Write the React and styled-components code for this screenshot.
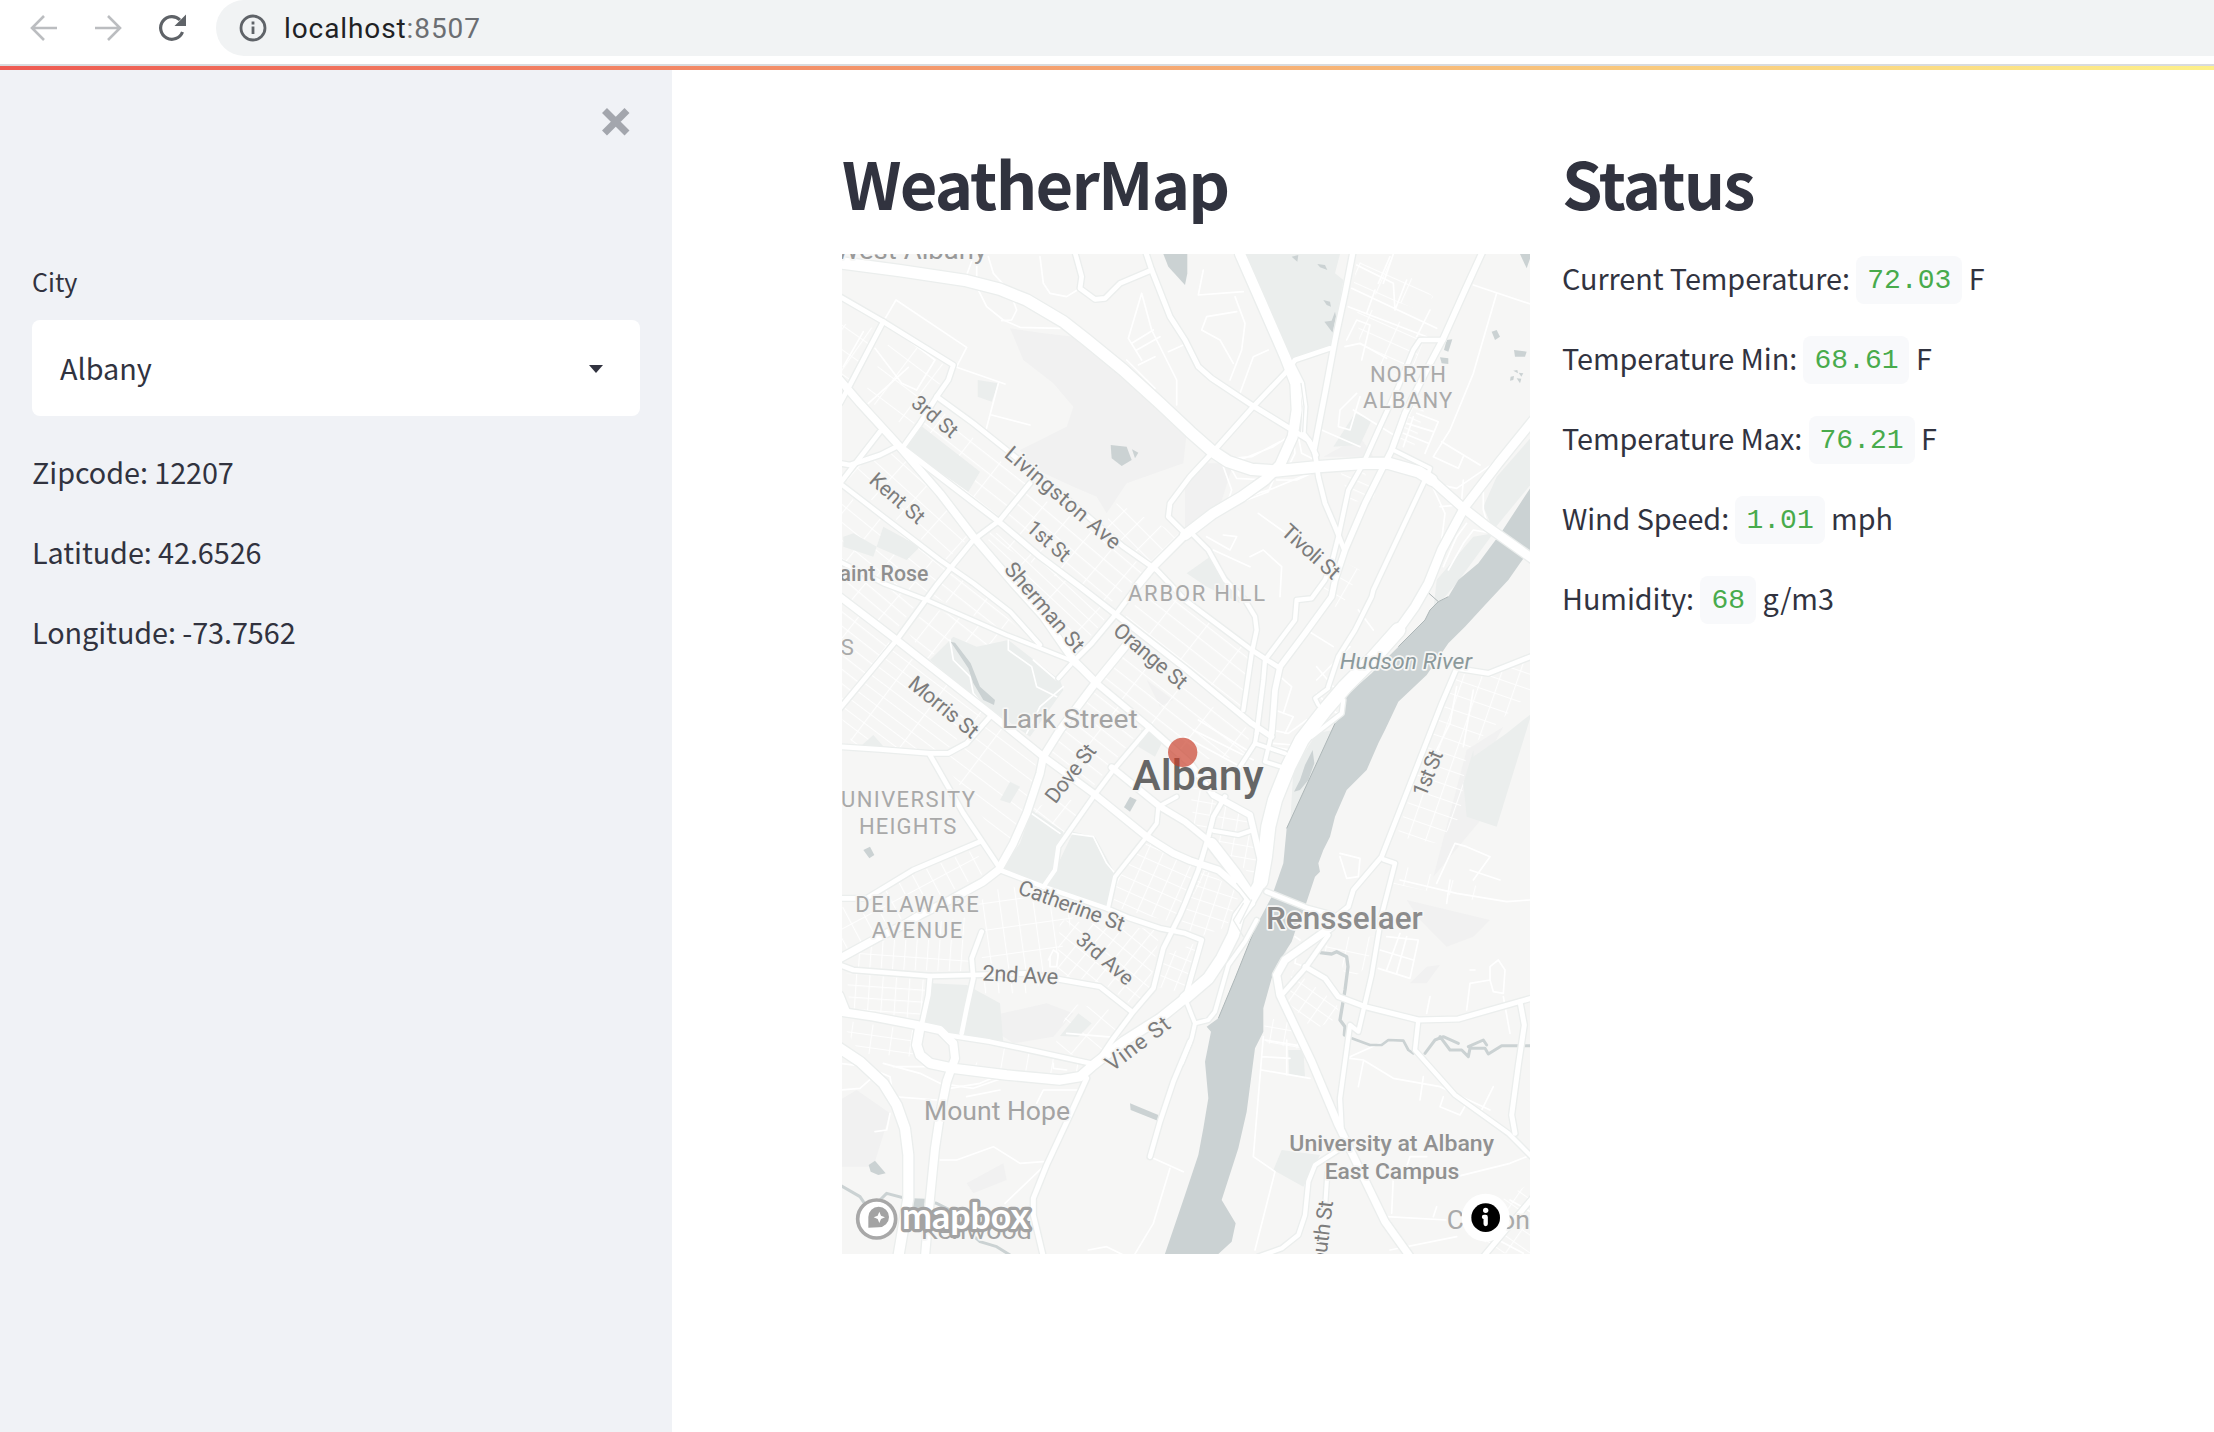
import React from 'react';
import styled, { createGlobalStyle } from 'styled-components';

const sans = `'Noto Sans CJK SC', 'Open Sans', sans-serif`;

const GlobalStyle = createGlobalStyle`
  * { box-sizing: border-box; }
  body { margin: 0; background: #fff; color: #31333f; font-family: ${sans}; overflow: hidden; }
  h1, p { margin: 0; }
`;

const Page = styled.div`
  width: 2214px;
  height: 1432px;
  display: flex;
  flex-direction: column;
`;

const BrowserBar = styled.header`
  height: 66px;
  flex: none;
  display: flex;
  align-items: flex-start;
  border-bottom: 2px solid #d9dbde;
`;

const NavIcons = styled.div`
  width: 216px;
  height: 56px;
  display: flex;
  align-items: center;
  padding-left: 28px;
  gap: 32px;
`;

const AddressBar = styled.div`
  flex: 1;
  height: 56px;
  display: flex;
  align-items: center;
  gap: 15px;
  padding-left: 21px;
  background: #f1f3f4;
  border-radius: 28px 0 0 28px;
`;

const Url = styled.span`
  font: 400 28px/40px Roboto, sans-serif;
  letter-spacing: 0.9px;
  padding-top: 1px;
  color: #202124;
`;

const Port = styled.span`
  color: #6b6e72;
`;

const Decoration = styled.div`
  height: 4px;
  flex: none;
  background: linear-gradient(90deg, #ee5a52 0%, #f5a470 50%, #fdf08a 100%);
`;

const Body = styled.div`
  flex: 1;
  display: flex;
`;

const Sidebar = styled.aside`
  width: 672px;
  background: #f0f2f6;
  padding: 36px 32px;
  display: flex;
  flex-direction: column;
`;

const CloseRow = styled.div`
  display: flex;
  justify-content: flex-end;
  padding-right: 8px;
  height: 155px;
`;

const Label = styled.label`
  font-size: 25.1px;
  line-height: 40px;
  height: 59px;
`;

const Select = styled.div`
  height: 96px;
  background: #fff;
  border-radius: 8px;
  display: flex;
  align-items: center;
  justify-content: space-between;
  padding: 0 36px 2px 28px;
  font-size: 28.8px;
  margin-bottom: 32px;

  svg {
    margin-top: 4px;
  }
`;

const Line = styled.p`
  font-size: 28.8px;
  line-height: 48px;
  letter-spacing: -0.07px;
  margin-bottom: 32px;
  white-space: pre;
`;

const Main = styled.main`
  flex: 1;
  display: flex;
  gap: 32px;
  padding: 69px 0 0 170px;
`;

const Column = styled.section`
  width: ${(p) => p.$width}px;
`;

const Title = styled.h1`
  font-size: 65px;
  font-weight: 700;
  line-height: 87px;
  letter-spacing: -1.8px;
  height: 115px;
`;

const Code = styled.code`
  display: inline-block;
  height: 48px;
  padding: 0 11px;
  border-radius: 8px;
  background: #f8f9fb;
  color: #48ab4c;
  font: 400 28px/50px 'Liberation Mono', monospace;
  letter-spacing: 0;
  vertical-align: top;
  transform: translateY(2px);
`;

const MapFrame = styled.svg`
  display: block;
  width: 688px;
  height: 1000px;
  background: #f6f6f5;
  font-family: Roboto, sans-serif;
`;

/* Street network: [width, points] in map units. */
const roads = [
  [34, '0,38 180,62 380,92 480,118 560,150 670,215 740,270 850,360 960,460 1050,545 1115,602 1165,635 1235,658 1305,663 1435,650 1575,640 1645,640 1735,665 1775,690'],
  [26, '1775,690 1865,770 1935,825 2080,928'],
  [30, '1200,12 1265,160 1335,320 1366,400 1370,480 1358,560 1320,645 1275,690 1205,740 1120,790 1035,855'],
  [22, '1035,855 990,900 935,955 890,1010'],
  [14, '890,1010 830,1090 755,1180 700,1235'],
  [14, '1355,340 1385,400 1395,470 1390,550 1420,590 1430,640 1435,680 1455,760 1485,830 1513,900'],
  [16, '1540,0 1515,130 1485,270 1455,430 1423,595'],
  [17, '1930,0 1875,120 1810,265 1765,350 1695,490 1655,600 1575,760 1515,900 1485,990 1475,1040 1395,1150 1320,1250 1305,1320 1300,1390 1295,1450'],
  [13, '1810,270 1740,270 1720,300 1675,410 1615,540 1570,640 1525,720 1495,860 1475,940 1455,990 1415,1045 1370,1050 1365,1110 1275,1230 1270,1290 1250,1450'],
  [13, '1755,690 1600,1020 1595,1040 1545,1140 1495,1220 1465,1310'],
  [12, '1660,600 1770,655 1760,685'],
  [26, '2080,510 1975,640 1875,770 1805,900 1765,1000 1725,1070 1675,1140'],
  [42, '1675,1140 1595,1230 1515,1310 1455,1380 1385,1470 1345,1550 1305,1650 1285,1730 1275,1820 1262,1895'],
  [34, '1262,1895 1225,1960 1195,2000 1180,2055 1145,2125 1105,2185 1035,2245'],
  [28, '1035,2245 960,2305 850,2375 760,2445 720,2480 660,2490 500,2475 340,2455 270,2440 240,2415 230,2385 240,2330'],
  [24, '0,2285 100,2300 230,2325 300,2340 340,2380 345,2425 320,2495 300,2595 285,2695 270,2845 255,3020'],
  [30, '0,2395 60,2435 130,2500 170,2565 195,2635 205,2715 205,2845 175,3020'],
  [20, '0,2235 20,2285'],
  [14, '0,2145 40,2160 270,2178 400,2175 560,2170 640,2185 780,2210 875,2285'],
  [22, '0,2125 110,2065 190,2025 240,1995 330,1950 430,1895 475,1860 520,1780 560,1690 600,1570 610,1520 660,1440 765,1300 855,1190'],
  [14, '270,2178 265,2235 245,2325'],
  [14, '425,2045 395,2125 400,2185 380,2275 365,2350'],
  [14, '320,2355 450,2375 600,2407 750,2440'],
  [15, '740,2485 690,2595 620,2745 580,2845 580,2895 610,3020'],
  [14, '1050,2375 1000,2495 960,2615 930,2720'],
  [14, '780,2425 820,2365 880,2285 940,2215 970,2095 1020,1995 1035,1960 1075,1860 1105,1760 1120,1700 1155,1640'],
  [14, '0,140 130,215 340,345 325,390 290,440 240,520 190,590'],
  [14, '130,215 30,405 0,460'],
  [22, '0,390 60,460 170,580 300,730 400,860 520,1000 610,1100 700,1230 770,1300'],
  [18, '770,1300 920,1425 1050,1540 1120,1635 1230,1695 1262,1830'],
  [14, '290,440 400,520 500,600 700,762 850,890 950,960 1035,1050 1235,1200 1320,1255'],
  [16, '170,580 300,680 470,810 600,920 720,1010 830,1095 1035,1255 1235,1420 1295,1460'],
  [14, '570,700 480,810 400,870 290,1005 170,1170 0,1375'],
  [14, '170,590 120,615 30,645 0,640'],
  [14, '120,545 0,700'],
  [13, '0,700 130,800 300,930 400,1000 510,1085 600,1185'],
  [20, '0,1040 170,1170 450,1390 610,1520 760,1630 920,1760 1000,1810 1050,1832 1135,1860 1205,1920 1235,1960'],
  [12, '0,935 130,1000 260,1050 500,1155 690,1230 770,1300'],
  [12, '655,1285 695,1240'],
  [14, '450,1400 380,1480 325,1510 270,1510 120,1498 0,1490'],
  [14, '270,1515 370,1690 480,1855'],
  [14, '0,1945 80,1945 220,1860 420,1775'],
  [14, '480,1860 610,1910 800,1975 870,2005 960,2035 1035,2050 1085,2070 1035,2245'],
  [13, '610,1910 645,1860 655,1790 760,1640 820,1560 930,1430'],
  [12, '805,1970 825,1880 920,1760 950,1720 955,1670 1010,1640'],
  [18, '815,1552 960,1670 1035,1715 1115,1780'],
  [32, '1115,1780 1185,1870 1225,1930'],
  [15, '915,0 935,60 990,200 1035,270 1075,350 1115,385 1235,465 1365,545 1405,570 1428,615'],
  [14, '703,0 725,80 720,115 765,148 795,145 840,100 935,60'],
  [14, '1030,845 985,800 990,760 1050,680 1115,610 1235,475 1335,370 1365,330 1470,295'],
  [13, '1055,850 1105,900 1155,990 1215,1050 1245,1100 1250,1140 1235,1210 1210,1380'],
  [14, '2080,1217 1945,1270 1850,1255 1805,1360 1625,1820 1540,1920 1525,1970 1475,2010'],
  [13, '1630,1828 1665,1840 1625,1995 1595,2175 1555,2345 1530,2325 1500,2545 1505,2640'],
  [22, '1475,2030 1335,2130 1310,2175 1320,2235 1415,2435 1495,2625 1635,2915 1710,3020'],
  [14, '1465,2055 1395,2155 1325,2235'],
  [15, '1395,2150 1455,2185 1495,2240 1575,2270 1735,2310 1855,2307 2080,2243'],
  [13, '1735,2310 1725,2400 1845,2535 2005,2650 2080,2725'],
  [15, '2040,2255 2053,2325 2035,2445 2015,2595 2025,2650'],
  [13, '1495,2700 1425,2745 1405,2795 1395,2895 1375,2955 1325,2995 1255,3020'],
  [12, '1462,2770 1456,2860'],
  [15, '2085,2835 1930,3020'],
  [12, '1250,2010 1215,2075 1165,2145 1125,2285 1105,2310 1065,2320 1035,2245'],
  [12, '1065,2320 1055,2365 1025,2440'],
  [11, '1465,1315 1425,1345 1435,1365'],
  [12, '1510,1350 1505,1390 1415,1460'],
  [12, '1250,1450 1245,1480 1200,1550'],
  [12, '1245,1480 1335,1510'],
  [12, '1295,1450 1275,1535 1330,1552'],
  [12, '1120,1742 1195,1755 1240,1740'],
  [14, '1280,1925 1405,1975 1480,1995'],
];

/* Ramps and residential lanes. */
const lanes = [
  '410,40 410,110 440,170 490,210 540,232 660,235', '445,20 460,70 510,125 530,180 515,210 485,212',
  '400,20 380,75', '130,215 168,150 380,292 350,350', '350,352 495,402 M475,400 438,540 M455,495 570,525',
  '600,20 610,100 630,130 680,140 712,120', '70,245 10,350 M105,295 185,400 230,420 M145,225 285,330 230,420 M85,460 205,352',
  '905,130 865,265 905,330 M905,130 935,240 1010,390 M875,280 940,240 M890,300 960,260 M985,305 1030,285 M860,330 945,415 M895,345 945,320 M1010,465 1010,390',
  '1110,610 1175,625 1235,620 1320,575 M1120,600 1200,630 1300,590 1360,550',
  '1360,560 1365,610 1350,640 M1372,545 1385,610 1415,625', '1150,650 1175,720 1160,765 M1170,650 1190,685 1280,690',
  '1205,745 1300,715 1420,665 M1300,690 1285,725 1220,750 M1310,690 1370,690 1425,665',
  '1780,700 1850,715 1960,640 M1775,705 1815,790 1805,870 M1800,770 1860,765 M1870,690 1865,750 M1990,640 1930,720 1930,780 1945,830',
  '1825,960 1870,880 1900,840 1960,850 M1810,950 1850,860 1880,820', '1900,800 1960,835',
  '1090,60 1075,135 1210,125 M1185,140 1215,220 1205,300 1170,390 M1190,185 1100,200 1085,240 1140,270 1180,340 M1200,430 1240,320 1285,300',
  '1550,45 1660,100 1665,180 M1630,100 1660,12 M1535,115 1790,235 M1525,170 1760,260 M1580,190 1605,120 M1615,100 1650,20 M1700,90 1665,180 M1770,180 1730,260',
  '1515,290 1560,280 1640,325 M1520,270 1550,210 1590,225 1565,330 M1550,430 1500,480 1495,530 1530,540 1560,440',
  '1445,540 1560,590 M1540,480 1670,560 M1730,490 1795,515 1755,610 M1720,500 1690,590 M1700,520 1780,545 M1690,550 1765,580',
  '1900,105 2080,165 M1970,130 1900,370 1830,540 1780,620 M1805,575 1920,645 M1780,620 1855,655 1870,620',
  '1255,790 1345,855 M1100,860 1170,900 1190,860 1150,855 M1120,900 1230,950 M1230,920 1270,900 1325,950 1320,1040',
  '1295,1440 1345,1450 1400,1410 M1300,1480 1360,1485 M1295,1490 1350,1500', '1430,1330 1490,1390 1530,1370',
  '1330,1390 1355,1310 1320,1280 M1305,1380 1360,1400 1335,1450', '1500,1810 1560,1825 1555,1880 1520,1885 1500,1820',
  '1790,1900 1845,1780 1880,1790 1950,1820 1900,1890 M1680,1890 1850,1930 2000,1955 2070,1950 M1890,1860 1980,1890 M1830,1890 1820,1960',
  '505,1170 505,1200 575,1250 590,1310 650,1340 M580,1230 650,1290 M670,1310 600,1370 560,1450 M330,1170 340,1230 390,1280 400,1330 440,1380',
  '690,1750 760,1760 800,1840 825,1870 M660,1750 560,1680', '0,2440 80,2450 150,2480 160,2540 290,2550 M0,2520 60,2515 100,2480',
  '130,2440 240,2470 330,2515 420,2500 500,2465 M160,2450 300,2450 M300,2500 400,2515 500,2480',
  '300,2730 350,2730 460,2690 540,2740 610,2735 M610,2750 495,2860 M150,2590 140,2640 105,2645 M380,2540 480,2520 M590,2560 610,2520 730,2520',
  '940,2725 1030,2765 M990,2755 940,2920 880,3020 M745,3000 800,2990 860,3020',
  '1270,2360 1240,2720 1305,2765 1245,3000 M1275,2370 1395,2390 M1265,2420 1350,2425 M1265,2460 1410,2485 M1340,2370 1340,2475',
  '1530,2425 1570,2430 1660,2485 1800,2510 1950,2580 M1570,2435 1555,2510 M1530,2420 1620,2380 M1750,2480 1740,2550 M1810,2540 1800,2570 1860,2595 1880,2560 M1960,2510 1920,2590',
  '1850,2780 2010,2740 2060,2720 M1640,2900 1820,2910 M1660,2780 1655,2890 M1700,2750 1710,2720 1760,2720 M1650,3000 1850,2960 M2010,2850 2080,2890 M1900,2930 2050,3010 M1780,2900 1790,2870',
  '1880,2280 1890,2200 1950,2190 1950,2150 1975,2130 1995,2160 1990,2230 1960,2225 1950,2190 M1990,2240 2010,2350 M1770,2240 1760,2290 M1905,2160 1890,2160',
  '1680,2050 1640,2160 M1640,2060 1735,2070 1710,2185 1615,2155 M1620,2100 1720,2130 M1700,2060 1670,2170',
  '1370,2100 1365,2140 1395,2150 M1380,2070 1365,2060', '1035,1460 1220,1560 M1060,1440 1240,1530 M1075,1410 1220,1500',
  '1400,1140 1480,1190 M1430,1290 1530,1190 M1555,1080 1600,1140 M1430,1250 1480,1310',
  '1850,1310 1830,1420 1790,1500 M1870,1490 1900,1320', '630,2120 630,2150 650,2150 655,2110 640,2100 625,2130 M680,2350 860,2365 M640,2440 640,2455 680,2460',
];

/* Blocks of regular side streets: [points, angle, spacing x, spacing y]. */
const blocks = [
  ['0,220 110,235 20,400 0,400', 35, 70, 60],
  ['160,250 330,355 210,540 70,440', 37, 90, 70],
  ['250,520 290,470 560,700 470,800 200,590', 38, 110, 42],
  ['0,720 180,850 330,970 260,1040 130,990 0,925', 39, 100, 42],
  ['40,640 170,600 390,860 320,930 20,690', 42, 95, 50],
  ['440,860 570,720 920,955 800,1070', 40, 80, 40],
  ['830,760 1030,860 930,940 780,850', 45, 55, 50],
  ['420,890 480,840 810,1090 700,1220', 43, 130, 30],
  ['330,960 400,1000 580,1180 280,1040', 38, 90, 40],
  ['0,950 240,1050 160,1150 0,1020', 40, 100, 34],
  ['170,1190 430,1390 320,1500 40,1490 0,1390', 37, 130, 32],
  ['200,1140 270,1070 500,1160 440,1230 330,1170 260,1230', 38, 60, 60],
  ['460,1410 590,1530 560,1670 500,1800 290,1510 350,1500', 37, 250, 44],
  ['0,1050 150,1180 0,1360', 38, 120, 34],
  ['620,1510 770,1320 910,1430 750,1620', 38, 125, 36],
  ['780,1290 850,1200 1230,1440 1220,1520 1050,1530', 38, 115, 40],
  ['850,1110 960,970 1230,1200 1210,1390', 38, 120, 42],
  ['650,1650 750,1650 650,1800 560,1680', 38, 60, 60],
  ['830,1870 930,1770 1110,1850 1010,2020 820,1970', 24, 45, 38],
  ['1080,1850 1200,1930 1160,2030 1080,2060 1020,2030', 18, 44, 38],
  ['1050,1600 1240,1700 1260,1900 1130,1780 1060,1720', 10, 42, 36],
  ['0,1975 60,1950 200,1880 400,1800 450,1860 230,1980 0,2110', -28, 46, 100],
  ['40,2080 200,2030 390,2000 400,2165 40,2155', 4, 34, 300],
  ['20,2170 260,2190 240,2310 30,2285', 4, 40, 36],
  ['0,2310 220,2340 220,2420 60,2410', 8, 60, 38],
  ['410,1960 500,1900 700,2000 640,2170 430,2170', -8, 50, 80],
  ['660,2010 960,2040 930,2210 880,2270 790,2200 650,2175', 39, 38, 42],
  ['690,2260 870,2290 760,2430 640,2400', 40, 80, 70],
  ['400,2190 620,2190 560,2230 410,2230', -6, 40, 100],
  ['450,2385 740,2430 700,2480 400,2450', 10, 75, 200],
  ['960,2120 1090,2070 1035,2230 950,2210', 22, 40, 36],
  ['1500,660 1570,660 1610,740 1530,760', 24, 80, 28],
  ['1550,160 1760,250 1700,400 1560,300', 24, 90, 42],
  ['1680,420 1760,450 1720,600 1680,590', 24, 160, 34],
  ['1820,1290 1850,1270 1940,1280 2070,1230 2070,1330 1960,1430 1880,1500 1860,1700 1790,1780 1670,1760', 19, 52, 44],
  ['1660,1840 1800,1880 1960,1920 1950,1960 1650,1900', 14, 70, 60],
  ['1360,2160 1490,2260 1500,2300 1420,2340 1330,2240', 35, 42, 36],
  ['1270,2300 1360,2320 1400,2400 1280,2380', 10, 42, 45],
  ['1480,2060 1600,2060 1580,2150 1520,2200 1500,2120 1440,2110', 12, 60, 60],
  ['1900,2900 2070,2800 2070,3010 1950,3010', 35, 70, 44],
  ['1550,40 1640,20 1780,140 1740,180 1540,110', 24, 80, 60],
  ['1480,920 1560,960 1500,1080 1440,1040', 30, 70, 50],
];

const parks = [
  '1200,12 1500,12 1485,70 1510,90 1475,290 1355,330 1330,310',
  '190,590 240,525 420,665 385,725', '270,1230 340,1160 410,1190 505,1170 660,1290 670,1320 570,1460 400,1340',
  '575,1680 670,1745 650,1860 610,1905 485,1855 540,1780', '700,1745 765,1760 825,1870 800,1970 620,1915 655,1840',
  '270,2200 380,2205 480,2260 490,2380 370,2360 255,2330', '2075,560 1970,680 1930,770 1960,840 2075,700',
  '1900,1500 1900,1520 2000,1450 2075,1390 1970,1730 1880,1700 1870,1600',
  '660,2358 715,2290 755,2320 715,2360', '1325,2700 1440,2715 1390,2810 1300,2760', '1345,2400 1390,2400 1395,2480 1348,2475',
  '1360,1560 1430,1450 1480,1440 1350,1730', '1280,2020 1360,2040 1320,2160 1250,2120', '1900,860 1960,850 1850,1000 1780,1080 1790,990',
  '130,830 240,890 200,930 110,890', '10,860 40,850 110,890 100,920 10,890', '413,390 475,400 455,455 413,440',
  '1040,970 1110,920 1170,990 1200,1060 1100,1010', '1480,590 1545,490 1595,510 1560,585', '60,1490 100,1455 140,1500',
  '480,1650 510,1595 540,1610 510,1660', '905,1440 975,1460 945,1520 895,1490',
];

const hills = [
  '510,235 610,250 700,260 820,360 1040,550 1030,640 860,700 800,790 770,740 700,710 570,650 540,600 680,530 700,470 640,400 550,330',
  '440,2300 620,2260 700,2290 640,2360 520,2380 460,2340', '380,2800 490,2740 500,2790 400,2830',
  '1700,1950 1950,2010 1900,2060 1820,2090 1740,2010', '1710,2200 1760,2150 1800,2145 1760,2200',
  '0,2550 50,2520 150,2590 100,2750 0,2750', '1880,1500 1990,1430 1930,1540 1980,1570 1930,1700 1780,1880',
  '1100,640 1180,640 1130,800 1035,850 1035,690', '1450,620 1560,560 1600,620', '920,1290 1000,1350 960,1370',
];

const ponds = [
  '970,12 1042,12 1042,70 1035,105 985,50', '812,585 860,590 875,630 845,648 815,625', '876,598 895,608 885,625',
  '332,1175 345,1178 392,1240 420,1310 465,1350 462,1365 430,1350 400,1300 385,1255', '1355,20 1375,15 1372,35',
  '1432,42 1455,45 1462,60 1440,52', '1450,150 1470,155 1473,170 1460,165', '1453,215 1475,212 1485,185 1488,200 1478,248',
  '2040,12 2075,12 2060,55', '1955,245 1970,240 1980,260 1965,270', '2022,300 2060,305 2055,320 2025,320',
  '1800,322 1825,325 1825,342 1805,340', '1820,270 1837,268 1825,305 1812,300',
  '2012,380 2022,378 2020,390 2010,392', '2020,362 2032,360 2034,370', '2030,385 2044,386 2040,400', '2036,368 2050,370 2044,380',
  '86,2745 105,2732 137,2770 115,2775 92,2765', '870,2560 955,2595 953,2612 872,2580', '70,1800 90,1790 103,1815 88,1825',
  '870,1640 890,1650 870,1685 852,1672', '1362,1625 1380,1590 1395,1545 1418,1500 1423,1540 1405,1590 1380,1620',
  '218,2845 255,2846 252,2880 220,2878',
];

const river =
  '2080,700 1985,845 1915,940 1855,990 1825,1040 1795,1055 1770,1080 1755,1110 1675,1190 1595,1270 1520,1335 1510,1390 1485,1420 1340,1735 1330,1840 1295,1940 1245,2035 1225,2085 1185,2185 1135,2305 1100,2330 1113,2345 1095,2435 1105,2545 1090,2635 1075,2715 1035,2835 972,3020 1135,3012 1175,2975 1187,2920 1145,2850 1195,2695 1220,2585 1245,2395 1270,2345 1270,2275 1295,2185 1310,2145 1355,2075 1365,2045 1395,1970 1405,1940 1425,1880 1440,1865 1435,1840 1450,1800 1470,1760 1485,1700 1520,1620 1580,1560 1615,1480 1635,1440 1675,1355 1760,1275 1825,1180 1875,1130 1935,1065 2005,990 2040,940 2080,885';

const streams = [
  [10, '1440,2108 1475,2112 1490,2105 1520,2120 1524,2150 1515,2220 1500,2310 1515,2330 1513,2355'],
  [8, '1535,2365 1590,2385 1625,2385 1645,2370 1690,2372 1705,2400 1720,2410'],
  [9, '1755,2410 1785,2370 1810,2360 1855,2380 M1800,2360 1830,2400 1865,2400 1885,2420 1890,2395 1935,2395 1945,2412 1985,2387 2080,2387 M1885,2390 1930,2370 1940,2385'],
  [9, '0,2805 60,2840 80,2870 M120,2850 140,2830 215,2850 290,2860 330,2880 370,2930 420,2975 470,2990 510,3015'],
];

/* Labels placed at their centre: [text, x, y, angle, length, size]. */
const streetNames = [
  ['3rd St', 285, 500, 40, 160, 62],
  ['Kent St', 172, 745, 41, 197, 62],
  ['Livingston Ave', 669, 743, 40.5, 435, 64],
  ['1st St', 626, 873, 41, 152, 62],
  ['Tivoli St', 1413, 905, 42, 212, 64],
  ['Sherman St', 614, 1071, 49.5, 332, 64],
  ['Orange St', 932, 1218, 40, 268, 64],
  ['Morris St', 311, 1371, 39.5, 252, 64],
  ['Dove St', 692, 1570, -52, 205, 64],
  ['Catherine St', 695, 1967, 20, 335, 64],
  ['3rd Ave', 795, 2126, 41, 205, 62],
  ['2nd Ave', 541, 2175, 3, 228, 66],
  ['Vine St', 893, 2381, -37, 225, 66],
  ['1st St', 1763, 1570, -68, 142, 64],
  ['South St', 1444, 2965, -83, 228, 64],
];

/* Place labels: [text, left, baseline, length, size, colour, weight, style]. */
const placeNames = [
  ['West Albany', -15, 26, 456, 76, '#999', 400],
  ['NORTH', 1590, 397, 228, 66, '#a9a9a9', 400],
  ['ALBANY', 1569, 475, 268, 66, '#a9a9a9', 400],
  ['ARBOR HILL', 864, 1052, 411, 66, '#a9a9a9', 400],
  ['Saint Rose', -40, 993, 305, 68, '#8f8f8f', 500],
  ['S', 2, 1215, 34, 66, '#a9a9a9', 400],
  ['Lark Street', 485, 1433, 408, 80, '#a3a3a3', 400],
  ['Hudson River', 1499, 1257, 397, 68, '#8b999b', 400, 'italic'],
  ['UNIVERSITY', 3, 1672, 402, 66, '#a9a9a9', 400],
  ['HEIGHTS', 57, 1752, 292, 66, '#a9a9a9', 400],
  ['DELAWARE', 46, 1985, 370, 66, '#a9a9a9', 400],
  ['AVENUE', 95, 2063, 272, 66, '#a9a9a9', 400],
  ['Rensselaer', 1278, 2036, 470, 92, '#8c8c8c', 500],
  ['Mount Hope', 252, 2611, 438, 80, '#a3a3a3', 400],
  ['Kenwood', 243, 2967, 332, 74, '#a3a3a3', 400],
  ['University at Albany', 1348, 2702, 614, 68, '#919191', 500],
  ['East Campus', 1454, 2788, 404, 68, '#919191', 500],
  ['Clinton', 1820, 2938, 250, 76, '#a9a9a9', 400],
  ['Albany', 877, 1621, 394, 126, '#666', 500],
];

const PlaceText = styled.text`
  paint-order: stroke;
  stroke: #f6f6f5;
  stroke-width: 10px;
  stroke-linejoin: round;
`;

const Wordmark = styled.text`
  font-family: Lato, sans-serif;
  font-weight: 700;
  font-size: 106px;
  paint-order: stroke;
  fill: #fff;
  stroke: #a3a3a3;
  stroke-width: 19px;
  stroke-linejoin: round;
`;

function CityMap() {
  return (
    <MapFrame viewBox="6 12 2064 3000" preserveAspectRatio="none">
      <defs>
        {blocks.map(([, angle, w, h], i) => (
          <pattern key={i} id={`block-${i}`} width={w} height={h} patternUnits="userSpaceOnUse" patternTransform={`rotate(${angle})`}>
            <path d={`M0 1.5H${w}M1.5 0V${h}`} stroke="#fff" strokeOpacity="0.9" strokeWidth="3.5" />
          </pattern>
        ))}
      </defs>
      {hills.map((p) => <polygon key={p} points={p} fill="#f1f1f1" />)}
      {blocks.map(([p], i) => <polygon key={p} points={p} fill={`url(#block-${i})`} />)}
      {parks.map((p) => <polygon key={p} points={p} fill="#ebeeed" />)}
      <g fill="none" strokeLinejoin="round" strokeLinecap="round">
        {lanes.map((d) => <path key={d} d={`M${d}`} stroke="#fff" strokeWidth="5" />)}
        {streams.map(([w, d]) => <path key={d} d={`M${d}`} stroke="#cbd2d3" strokeWidth={w} />)}
      </g>
      {ponds.map((p) => <polygon key={p} points={p} fill="#cbd2d3" />)}
      <polygon points={river} fill="#cbd2d3" />
      <path d="M1675 1190 1755 1110 1770 1080 1795 1055 1825 1040M1795 1055 1767 1030M1485 1420 1340 1735M1245 2035 1185 2185 1135 2305" fill="none" stroke="#aeb7b8" strokeWidth="3" />
      <g fill="none" strokeLinejoin="round" strokeLinecap="round">
        {roads.map(([w, d]) => <polyline key={d} points={d} stroke="#ebeeed" strokeWidth={w + 8} />)}
        {roads.map(([w, d]) => <polyline key={d} points={d} stroke="#fff" strokeWidth={w} />)}
        <path d="M1383 400 1392 470 1388 545M1210 1960 1180 2010 1210 2060M1190 1900 1230 1950M1235 1950 1200 2020" stroke="#ebeeed" strokeWidth="4" />
      </g>
      {streetNames.map(([t, x, y, a, len, size]) => (
        <PlaceText key={t + y} x="0" y={size * 0.34} transform={`translate(${x} ${y}) rotate(${a})`} textAnchor="middle" textLength={len} fontSize={size} fill="#7c7c7c">{t}</PlaceText>
      ))}
      {placeNames.map(([t, x, y, len, size, fill, weight, style]) => (
        <PlaceText key={t} x={x} y={y} textLength={len} lengthAdjust={t === t.toUpperCase() ? 'spacing' : 'spacingAndGlyphs'} fontSize={size} fontWeight={weight} fontStyle={style} fill={fill}>{t}</PlaceText>
      ))}
      <circle cx="1028" cy="1507" r="44" fill="#c83c28" fillOpacity="0.68" />
      <circle cx="110" cy="2907" r="57" fill="#fff" stroke="#a8a8a8" strokeWidth="11" />
      <path d="M85 2933V2901A31 31 0 1 1 116 2932Z" fill="#a3a3a3" />
      <path d="M118 2885 123 2897 135 2902 123 2907 118 2919 113 2907 101 2902 113 2897Z" fill="#fff" />
      <Wordmark x="186" y="2936" textLength="382" lengthAdjust="spacingAndGlyphs">mapbox</Wordmark>
      <circle cx="1937" cy="2903" r="72" fill="#fff" />
      <circle cx="1937" cy="2903" r="43" fill="#000" />
      <circle cx="1937" cy="2881" r="8" fill="#fff" />
      <path d="M1932 2901H1937V2922" fill="none" stroke="#fff" strokeWidth="13" strokeLinecap="round" strokeLinejoin="round" />
    </MapFrame>
  );
}

const readings = [
  ['Current Temperature:', '72.03', 'F'],
  ['Temperature Min:', '68.61', 'F'],
  ['Temperature Max:', '76.21', 'F'],
  ['Wind Speed:', '1.01', 'mph'],
  ['Humidity:', '68', 'g/m3'],
];

export default function App() {
  return (
    <Page>
      <GlobalStyle />
      <BrowserBar>
        <NavIcons>
          <svg width="32" height="32" viewBox="0 0 32 32" fill="none" stroke="#bbbdc0" strokeWidth="2.6">
            <path d="M29 16H4M16 4 4 16l12 12" />
          </svg>
          <svg width="32" height="32" viewBox="0 0 32 32" fill="none" stroke="#bbbdc0" strokeWidth="2.6">
            <path d="M3 16h25M16 4l12 12-12 12" />
          </svg>
          <svg width="32" height="32" viewBox="0 0 32 32" fill="none" stroke="#5f6368" strokeWidth="3.2">
            <path d="M26.5 20A11.3 11.3 0 1 1 24 8" />
            <path d="M30 2.5V14H18.5Z" fill="#5f6368" stroke="none" />
          </svg>
        </NavIcons>
        <AddressBar>
          <svg width="32" height="32" viewBox="0 0 32 32" fill="none" stroke="#5f6368" strokeWidth="2.8">
            <circle cx="16" cy="16" r="12" />
            <path d="M16 14.5V22M16 9.5v3" />
          </svg>
          <Url>localhost<Port>:8507</Port></Url>
        </AddressBar>
      </BrowserBar>
      <Decoration />
      <Body>
        <Sidebar>
          <CloseRow>
            <svg width="32" height="32" viewBox="0 0 32 32" stroke="#a3a6ad" strokeWidth="7">
              <path d="M4.500 4.500 27 27M27 4.500 4.500 27" />
            </svg>
          </CloseRow>
          <Label>City</Label>
          <Select>
            Albany
            <svg width="16" height="10" viewBox="0 0 16 10"><path d="M1 1h14L8 9Z" fill="#31333f" /></svg>
          </Select>
          <Line>Zipcode: 12207</Line>
          <Line>Latitude: 42.6526</Line>
          <Line>Longitude: -73.7562</Line>
        </Sidebar>
        <Main>
          <Column $width={688}>
            <Title>WeatherMap</Title>
            <CityMap />
          </Column>
          <Column $width={620}>
            <Title>Status</Title>
            {readings.map(([name, value, unit]) => (
              <Line key={name}>{name} <Code>{value}</Code> {unit}</Line>
            ))}
          </Column>
        </Main>
      </Body>
    </Page>
  );
}
